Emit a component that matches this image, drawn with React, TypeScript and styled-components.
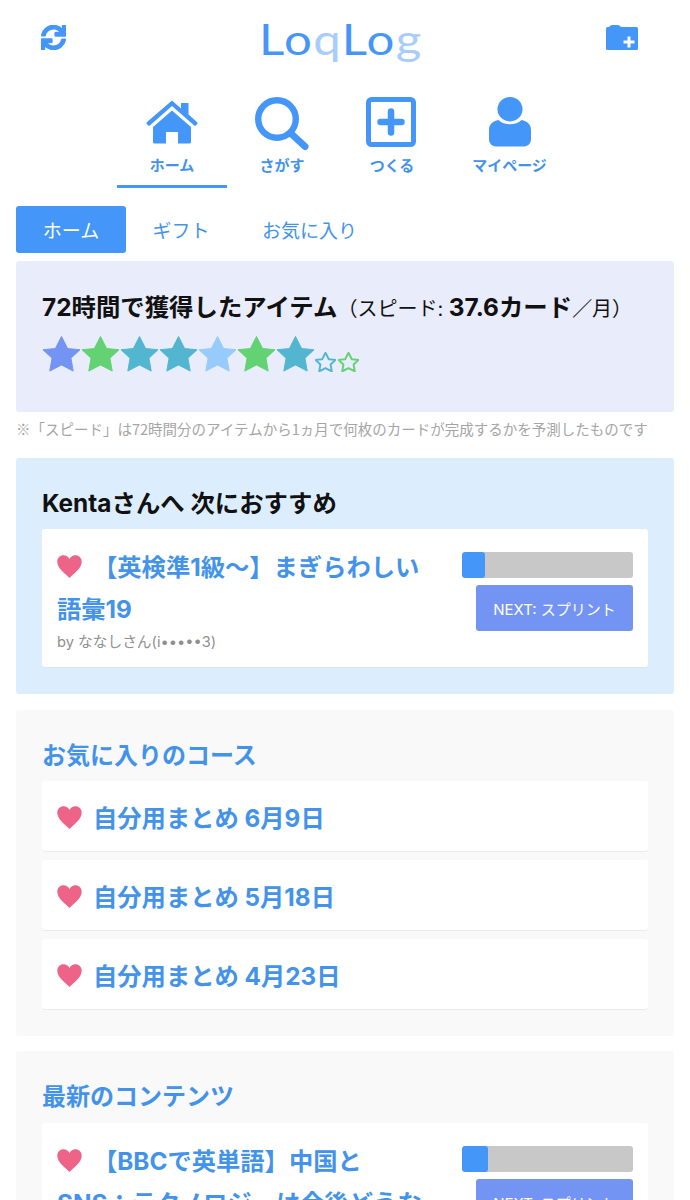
import React from "react";
import styled, { createGlobalStyle } from "styled-components";
import { FaSync } from "react-icons/fa";

const FONT = `Inter, "Noto Sans CJK JP", "Noto Sans", sans-serif`;
const BLUE = "#4496f8";
const TEXT_BLUE = "#4493ea";

const Global = createGlobalStyle`
  html, body { margin: 0; padding: 0; background: #fff; }
  body { font-family: ${FONT}; overflow: hidden; height: 1200px; }
  * { box-sizing: border-box; }
`;

const Page = styled.div`
  width: 690px;
  height: 1200px;
  overflow: hidden;
  display: flex;
  flex-direction: column;
  & > * {
    flex: none;
  }
`;
const TopBar = styled.header`
  height: 91px;
  padding: 25px 52px 0 41px;
  display: grid;
  grid-template-columns: 1fr auto 1fr;
  align-items: start;
`;
const Logo = styled.div`
  font-family: Lato, sans-serif;
  font-weight: 400;
  font-size: 42px;
  line-height: 28px;
  color: ${BLUE};
  letter-spacing: 1.2px;
  margin-left: 2px;
  transform: scaleX(1.17);
`;
const LogoLight = styled.span`
  color: #a9cdfb;
`;
const TopIcon = styled.div<{ $end?: boolean }>`
  color: ${BLUE};
  display: flex;
  justify-content: ${(p) => (p.$end ? "flex-end" : "flex-start")};
`;
const Nav = styled.nav`
  display: flex;
  padding-left: 117px;
  height: 100px;
`;
const NavItem = styled.div<{ $active?: boolean; $wide?: boolean }>`
  width: ${(p) => (p.$wide ? "125px" : "110px")};
  height: 97px;
  display: flex;
  flex-direction: column;
  align-items: center;
  border-bottom: 3px solid ${(p) => (p.$active ? BLUE : "transparent")};
  color: ${TEXT_BLUE};
  font-size: 15px;
  font-weight: 700;
`;
const NavIconBox = styled.div`
  height: 64px;
  padding-top: 6px;
  display: flex;
  align-items: flex-start;
`;
const NavLabel = styled.span`
  line-height: 22px;
`;
const Tabs = styled.div`
  display: flex;
  padding: 15px 16px 0;
  height: 70px;
`;
const Tab = styled.div<{ $active?: boolean }>`
  height: 47px;
  padding: 0 26px;
  min-width: 110px;
  display: flex;
  align-items: center;
  justify-content: center;
  border-radius: 3px;
  font-size: 19px;
  color: ${(p) => (p.$active ? "#fff" : TEXT_BLUE)};
  background: ${(p) => (p.$active ? BLUE : "transparent")};
`;
const Panel = styled.section<{ $bg: string }>`
  margin: 0 16px;
  padding: 26px;
  background: ${(p) => p.$bg};
  border-radius: 3px;
`;
const SpeedPanel = styled(Panel)`
  height: 151px;
  padding-top: 28px;
`;
const SpeedLine = styled.div`
  font-size: 24.4px;
  line-height: 36px;
  font-weight: 700;
  color: #111;
  white-space: nowrap;
`;
const SpeedNormal = styled.span`
  font-size: 20px;
  font-weight: 400;
`;
const Stars = styled.div`
  display: flex;
  align-items: flex-end;
  margin-top: 8px;
`;
const Note = styled.p`
  margin: 7px 16px 0;
  height: 39px;
  font-family: "Noto Sans CJK JP", sans-serif;
  font-size: 14.5px;
  line-height: 20px;
  color: #a5a5a5;
  white-space: nowrap;
`;
const RecommendPanel = styled(Panel)`
  height: 236px;
  margin-bottom: 16px;
  padding-top: 27px;
`;
const GreyPanel = styled(Panel)`
  margin-bottom: 15px;
  padding: 28px 26px 27px;
`;
const BlackTitle = styled.h2`
  margin: 0 0 8px;
  font-size: 24.4px;
  line-height: 36px;
  font-weight: 700;
  color: #111;
`;
const BlueTitle = styled.h2<{ $gap: number }>`
  margin: 0 0 ${(p) => p.$gap}px;
  font-size: 24px;
  line-height: 36px;
  font-weight: 700;
  color: ${TEXT_BLUE};
`;
const Card = styled.div`
  background: #fff;
  border-radius: 3px;
  padding: 18px 15px 14px;
  display: flex;
  justify-content: space-between;
  box-shadow: 0 1px 1px rgba(0, 0, 0, 0.03);
`;
const CardText = styled.div`
  width: 380px;
`;
const CardTitle = styled.div`
  font-size: 24.3px;
  line-height: 40px;
  font-weight: 700;
  color: ${TEXT_BLUE};
`;
const HeartWrap = styled.span`
  display: inline-block;
  vertical-align: -2px;
  margin-right: 11px;
`;
const By = styled.div`
  margin-top: 2px;
  font-size: 14.7px;
  line-height: 22px;
  color: #8f8f8f;
`;
const CardSide = styled.div`
  display: flex;
  flex-direction: column;
  align-items: flex-end;
  width: 171px;
  padding-top: 5px;
`;
const Track = styled.div`
  width: 171px;
  height: 26px;
  background: #c8c8c8;
  border-radius: 3px;
  overflow: hidden;
`;
const Fill = styled.div`
  height: 100%;
  background: ${BLUE};
  border-radius: 3px;
`;
const NextButton = styled.div`
  margin-top: 7px;
  width: 157px;
  height: 46px;
  background: #7394f2;
  color: #fff;
  border-radius: 3px;
  font-size: 15px;
  display: flex;
  align-items: center;
  justify-content: center;
  white-space: nowrap;
`;
const CourseRow = styled.div`
  height: 70px;
  margin-bottom: 9px;
  background: #fff;
  border-radius: 3px;
  padding: 0 15px;
  display: flex;
  align-items: center;
  font-size: 24.3px;
  font-weight: 700;
  color: ${TEXT_BLUE};
  box-shadow: 0 1px 1px rgba(0, 0, 0, 0.06);
  &:last-child {
    margin-bottom: 0;
  }
`;
const RowHeart = styled.span`
  display: flex;
  margin-right: 11px;
  margin-top: 3px;
`;

const Heart = () => (
  <svg width="25" height="23" viewBox="0 0 25 23" fill="#ee6488">
    <path d="M12.5 23C9 19 .3 14 .3 6.800 .3 2.900 3.200 .3 6.500 .3c2.700 0 4.900 1.400 6 3.700 1.100-2.300 3.300-3.700 6-3.700 3.300 0 6.200 2.600 6.200 6.500C24.700 14 16 19 12.500 23z" />
  </svg>
);

const Star = ({ c, w = 39, outline }: { c: string; w?: number; outline?: boolean }) => (
  <svg
    width={w}
    height={(w * 38) / 40}
    viewBox="-0.5 -0.5 40 38"
    style={{ flex: "none", marginRight: outline ? 2 : 0 }}
  >
    <path
      d="M19.5 1l6.300 12.400 12.700 1.200-9.300 8.700 2.300 13.200-12-6.300-12 6.300 2.300-13.200L.5 14.600l12.700-1.200z"
      fill={outline ? "none" : c}
      stroke={c}
      strokeWidth={outline ? 3.6 : 1}
      strokeLinejoin="round"
    />
  </svg>
);

const FolderIcon = () => (
  <svg width="32" height="25" viewBox="0 0 32 25">
    <path
      fill={BLUE}
      fillRule="evenodd"
      d="M1.500 2H3C4 .7 5 0 6.500 0h5C13 0 14 .7 15 2h15.500A1.500 1.500 0 0 1 32 3.500V23.500a1.500 1.500 0 0 1-1.500 1.500H1.500A1.500 1.500 0 0 1 0 23.500V3.500A1.500 1.500 0 0 1 1.500 2zM21.500 11.500v4h-4v3h4v4h3v-4h4v-3h-4v-4z"
    />
  </svg>
);
const HomeIcon = () => (
  <svg width="52" height="46" viewBox="0 0 52 46" fill={BLUE} style={{ marginTop: 3 }}>
    <path d="M26 .500l9 8V3h7.500v11.500L51 22a1.500 1.500 0 0 1 0 2.200l-1 1a1.500 1.500 0 0 1-2.100 0L26 6 4.100 25.200a1.500 1.500 0 0 1-2.100 0l-1-1A1.500 1.500 0 0 1 1 22z" />
    <path d="M26 10.500L45 27v15a1.500 1.500 0 0 1-1.500 1.500H32V32H20v11.500H8.500A1.500 1.500 0 0 1 7 42V27z" />
  </svg>
);
const SearchIcon = () => (
  <svg width="54" height="54" viewBox="0 0 54 54" fill="none" stroke={BLUE}>
    <circle cx="22" cy="22" r="18.800" strokeWidth="6.400" />
    <path d="M36 36.500l14 13" strokeWidth="7" strokeLinecap="round" />
  </svg>
);
const CreateIcon = () => (
  <svg width="50" height="50" viewBox="0 0 50 50" style={{ marginLeft: -2 }}>
    <rect x="2.500" y="2.500" width="45" height="45" rx="3" fill="none" stroke={BLUE} strokeWidth="5" />
    <path d="M25 14.500v21M14.500 25h21" stroke={BLUE} strokeWidth="6.500" strokeLinecap="round" />
  </svg>
);
const UserIcon = () => (
  <svg width="42" height="50" viewBox="0 0 42 50" fill={BLUE}>
    <ellipse cx="21" cy="12.200" rx="12.500" ry="12.200" />
    <path d="M9.500 23c3 3 7 4.300 11.500 4.300S29.500 26 32.500 23C38 24 42 27 42 33v9c0 5-3.500 7.500-8 7.500H8c-4.500 0-8-2.500-8-7.500v-9c0-6 4-9 9.500-10z" />
  </svg>
);

const starColors = ["#7394f2", "#62d272", "#52b6d0", "#52b6d0", "#97cbfc", "#62d272", "#52b6d0"];

const ContentCard = ({ children, by, pct }: { children: React.ReactNode; by?: string; pct: number }) => (
  <Card>
    <CardText>
      <CardTitle>
        <HeartWrap>
          <Heart />
        </HeartWrap>
        {children}
      </CardTitle>
      {by && <By>{by}</By>}
    </CardText>
    <CardSide>
      <Track>
        <Fill style={{ width: `${pct}%` }} />
      </Track>
      <NextButton>NEXT: スプリント</NextButton>
    </CardSide>
  </Card>
);

const Course = ({ name }: { name: string }) => (
  <CourseRow>
    <RowHeart>
      <Heart />
    </RowHeart>
    {name}
  </CourseRow>
);

export default function App() {
  return (
    <Page>
      <Global />
      <TopBar>
        <TopIcon>
          <FaSync size={25} stroke="currentColor" strokeWidth={28} />
        </TopIcon>
        <Logo>
          Lo<LogoLight>q</LogoLight>Lo<LogoLight>g</LogoLight>
        </Logo>
        <TopIcon $end>
          <FolderIcon />
        </TopIcon>
      </TopBar>
      <Nav>
        <NavItem $active>
          <NavIconBox><HomeIcon /></NavIconBox>
          <NavLabel>ホーム</NavLabel>
        </NavItem>
        <NavItem>
          <NavIconBox><SearchIcon /></NavIconBox>
          <NavLabel>さがす</NavLabel>
        </NavItem>
        <NavItem>
          <NavIconBox><CreateIcon /></NavIconBox>
          <NavLabel>つくる</NavLabel>
        </NavItem>
        <NavItem $wide>
          <NavIconBox><UserIcon /></NavIconBox>
          <NavLabel>マイページ</NavLabel>
        </NavItem>
      </Nav>
      <Tabs>
        <Tab $active>ホーム</Tab>
        <Tab>ギフト</Tab>
        <Tab>お気に入り</Tab>
      </Tabs>
      <SpeedPanel $bg="#e8ecfb">
        <SpeedLine>
          72時間で獲得したアイテム<SpeedNormal>（スピード: </SpeedNormal>37.6カード<SpeedNormal>／月）</SpeedNormal>
        </SpeedLine>
        <Stars>
          {starColors.map((c, i) => (
            <Star key={i} c={c} />
          ))}
          <Star c="#52b6d0" w={21} outline />
          <Star c="#62d272" w={21} outline />
        </Stars>
      </SpeedPanel>
      <Note>※「スピード」は72時間分のアイテムから1ヵ月で何枚のカードが完成するかを予測したものです</Note>
      <RecommendPanel $bg="#dceefe">
        <BlackTitle>Kentaさんへ 次におすすめ</BlackTitle>
        <ContentCard by="by ななしさん(i•••••3)" pct={13.5}>
          【英検準1級〜】まぎらわしい語彙19
        </ContentCard>
      </RecommendPanel>
      <GreyPanel $bg="#f9f9f9">
        <BlueTitle $gap={7}>お気に入りのコース</BlueTitle>
        <Course name="自分用まとめ 6月9日" />
        <Course name="自分用まとめ 5月18日" />
        <Course name="自分用まとめ 4月23日" />
      </GreyPanel>
      <GreyPanel $bg="#f9f9f9">
        <BlueTitle $gap={8}>最新のコンテンツ</BlueTitle>
        <ContentCard pct={15}>
          【BBCで英単語】中国と
          <br />
          SNS：テクノロジーは今後どうなる
        </ContentCard>
      </GreyPanel>
    </Page>
  );
}
